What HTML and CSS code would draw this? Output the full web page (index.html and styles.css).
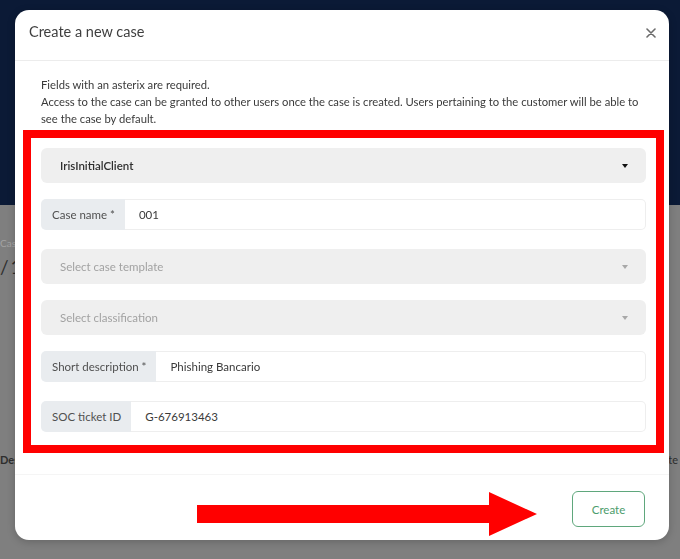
FILE: index.html
```html
<!DOCTYPE html>
<html lang="en">
<head>
    <meta charset="UTF-8">
    <meta name="viewport" content="width=device-width, initial-scale=1.0">
    <title>Cases - New case</title>
    <link rel="stylesheet" href="styles.css">
</head>
<body>
    <!-- page behind the dialog -->
    <div class="app">
        <header class="app-top"></header>
        <main class="app-main">
            <div class="crumb">Cases</div>
            <div class="counter">/ 1</div>
            <div class="table-head">
                <span class="th-first">Description</span>
                <span class="th-last">Last update</span>
            </div>
        </main>
    </div>

    <div class="backdrop">
        <div class="modal">
            <div class="modal-header">
                <h5>Create a new case</h5>
                <button class="close" type="button" aria-label="Close">
                    <svg width="10" height="10" viewBox="0 0 10 10"><path d="M1 1L9 9M9 1L1 9" stroke="#6b6b6b" stroke-width="1.6" stroke-linecap="round"/></svg>
                </button>
            </div>

            <div class="modal-body">
                <p class="intro">Fields with an asterix are required.<br>
                Access to the case can be granted to other users once the case is created. Users pertaining to the customer will be able to see the case by default.</p>

                <form class="case-form">
                    <div class="select gap-sm">
                        <span class="value">IrisInitialClient</span>
                        <span class="caret"></span>
                    </div>

                    <div class="input-group gap-lg">
                        <span class="label">Case name *</span>
                        <input type="text" value="001">
                    </div>

                    <div class="select gap-sm">
                        <span class="placeholder">Select case template</span>
                        <span class="caret muted"></span>
                    </div>

                    <div class="select gap-sm">
                        <span class="placeholder">Select classification</span>
                        <span class="caret muted"></span>
                    </div>

                    <div class="input-group gap-lg">
                        <span class="label">Short description *</span>
                        <input type="text" value="Phishing Bancario">
                    </div>

                    <div class="input-group">
                        <span class="label">SOC ticket ID</span>
                        <input type="text" value="G-676913463">
                    </div>
                </form>
            </div>

            <div class="modal-footer">
                <svg class="arrow" width="341" height="47" viewBox="0 0 341 47">
                    <polygon points="0,14 292,14 292,1 340,23 292,45 292,32 0,32" fill="#ff0000"/>
                </svg>
                <button class="btn-create" type="button">Create</button>
            </div>
        </div>
    </div>
</body>
</html>
```

FILE: styles.css
```css
* {
    box-sizing: border-box;
}

body {
    margin: 0;
    font-family: Lato, "Open Sans", sans-serif;
    background-color: #7f7f7f;
    overflow: hidden;
    height: 559px;
}

/* dimmed page under the dialog */
.app-top {
    height: 205px;
    background-color: #0b1a36;
}

.app-main {
    padding-top: 32px;
    color: #2e2e2e;
}

.crumb {
    font-size: 10px;
    color: #a3a3a3;
}

.counter {
    font-size: 19px;
    margin-top: 6px;
    word-spacing: -3px;
}

.table-head {
    display: flex;
    justify-content: space-between;
    margin-top: 175px;
    padding-right: 2px;
    font-size: 11px;
    font-weight: bold;
}

.th-last {
    font-weight: normal;
}

.backdrop {
    position: fixed;
    inset: 0;
}

.modal {
    position: absolute;
    left: 15px;
    top: 10px;
    width: 654px;
    height: 530px;
    background: #ffffff;
    border-radius: 14px;
    box-shadow: 0 2px 8px rgba(0, 0, 0, 0.2);
    display: flex;
    flex-direction: column;
}

.modal-header {
    height: 51px;
    border-bottom: 1px solid #ececec;
    display: flex;
    align-items: center;
    justify-content: space-between;
    padding: 0 13px 5px 14px;
}

.modal-header h5 {
    margin: 0;
    font-size: 14.5px;
    font-weight: normal;
    color: #3f3f3f;
    padding-bottom: 2px;
}

.close {
    background: none;
    border: none;
    padding: 0;
    display: flex;
    cursor: pointer;
}

.modal-body {
    padding: 15px 5px 0 8px;
}

.intro {
    margin: 0 18px 3px;
    font-size: 11.25px;
    line-height: 17px;
    color: #3a3a3a;
}

.case-form {
    border: 8px solid #ff0000;
    padding: 10px 10px 13px;
}

.select {
    height: 35px;
    background-color: #efefef;
    border-radius: 6px;
    display: flex;
    align-items: center;
    justify-content: space-between;
    padding: 0 18px 0 19px;
    font-size: 11.5px;
}

.value {
    color: #2f2f2f;
    font-weight: 600;
}

.placeholder {
    color: #a2a2a2;
}

.caret {
    width: 0;
    height: 0;
    border-left: 3.5px solid transparent;
    border-right: 3.5px solid transparent;
    border-top: 4px solid #111111;
}

.caret.muted {
    border-top-color: #a8a8a8;
}

.input-group {
    height: 31px;
    display: flex;
    font-size: 11.5px;
}

.gap-sm {
    margin-bottom: 16px;
}

.gap-lg {
    margin-bottom: 19px;
}

.label {
    display: flex;
    align-items: center;
    padding: 0 10px 0 11px;
    background-color: #e9ecef;
    border-radius: 5px 0 0 5px;
    color: #505050;
    white-space: nowrap;
}

.input-group input {
    flex: 1;
    border: 1px solid #eeeeee;
    border-left: none;
    border-radius: 0 5px 5px 0;
    padding: 0 14px;
    font-family: inherit;
    font-size: 11.5px;
    color: #3a3a3a;
    outline: none;
}

.modal-footer {
    position: relative;
    margin-top: auto;
    height: 66px;
    border-top: 1px solid #f5f5f5;
    display: flex;
    align-items: flex-start;
    justify-content: flex-end;
    padding: 16px 24px 0;
}

.arrow {
    position: absolute;
    left: 182px;
    top: 16px;
}

.btn-create {
    width: 73px;
    height: 36px;
    background: #ffffff;
    border: 1px solid #5fa77c;
    border-radius: 6px;
    color: #4c9c6b;
    font-family: inherit;
    font-size: 11.5px;
    cursor: pointer;
}
```
